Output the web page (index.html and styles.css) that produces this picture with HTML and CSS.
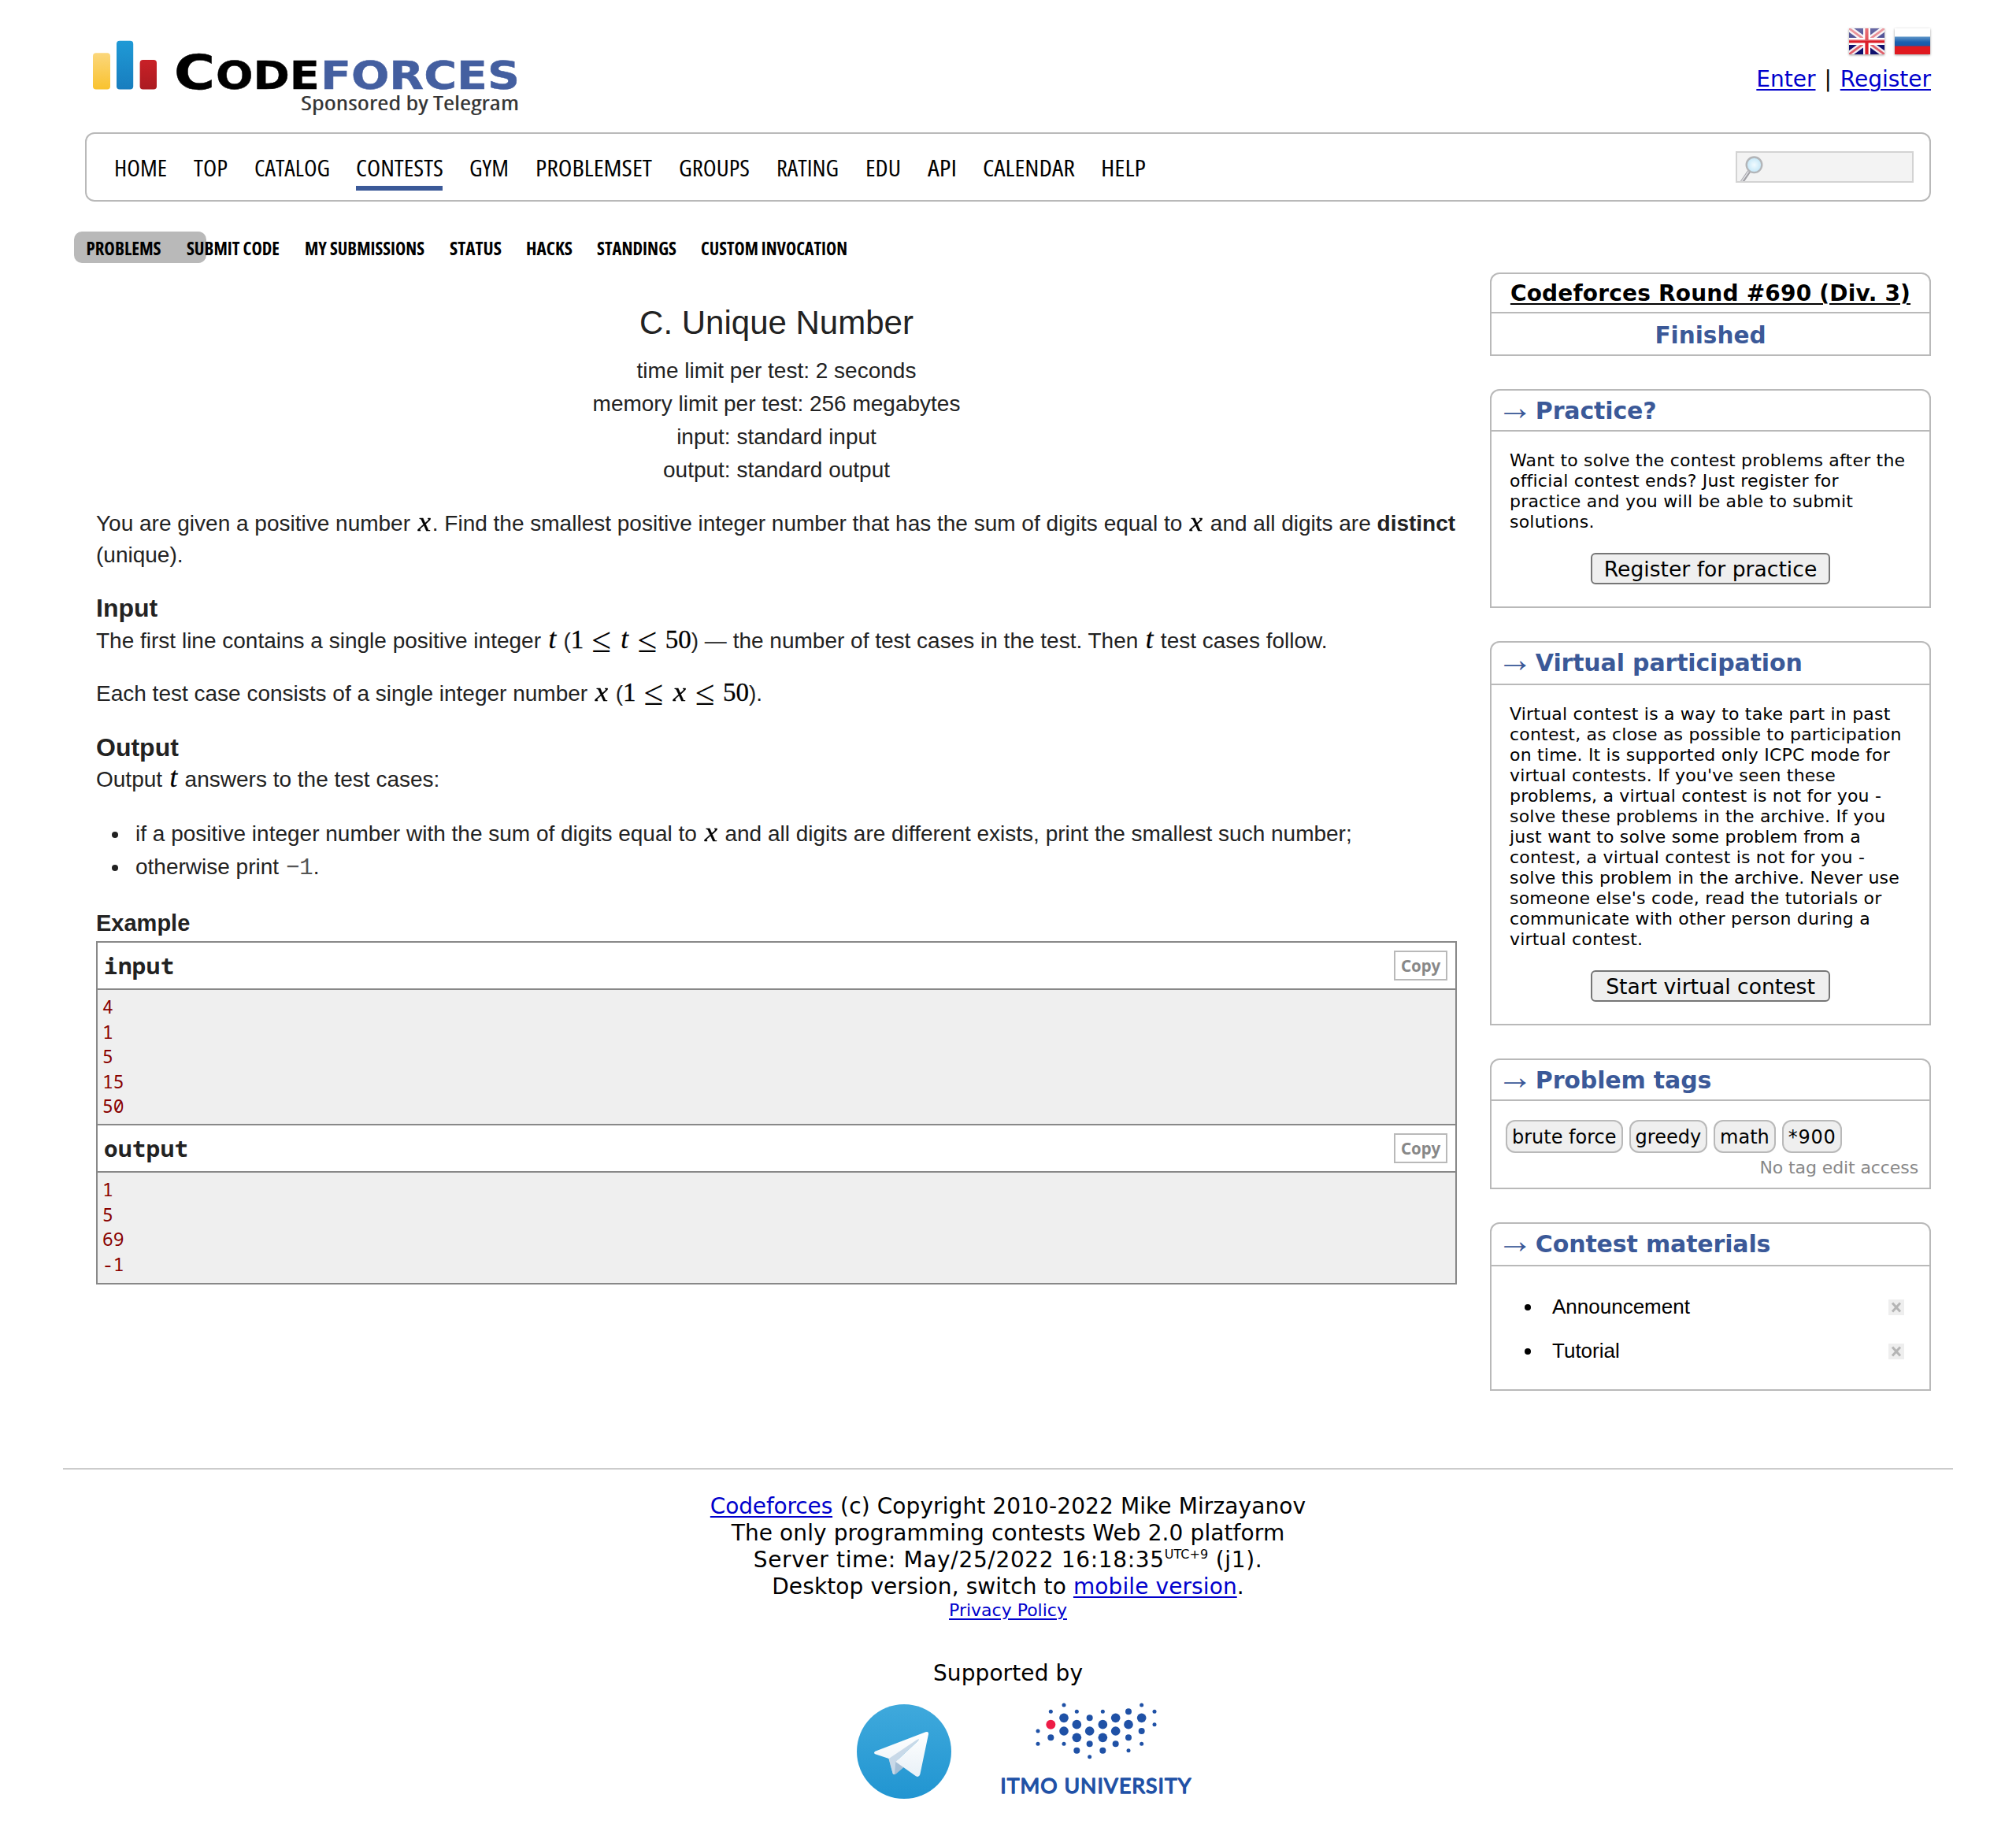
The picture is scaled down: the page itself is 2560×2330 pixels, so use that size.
FILE: index.html
```html
<!DOCTYPE html>
<html lang="en">
<head>
<meta charset="utf-8">
<title>Problem - C - Codeforces</title>
<link rel="stylesheet" href="styles.css">
</head>
<body>
<div class="page">
  <header class="header">
    <svg class="logo" width="560" height="110" viewBox="108 44 560 110">
      <defs>
        <linearGradient id="ly" x1="0" y1="0" x2="0" y2="1"><stop offset="0" stop-color="#fbd77c"/><stop offset="1" stop-color="#f9c22e"/></linearGradient>
        <linearGradient id="lb" x1="0" y1="0" x2="0" y2="1"><stop offset="0" stop-color="#1f9ad6"/><stop offset="1" stop-color="#187dbe"/></linearGradient>
        <linearGradient id="lr" x1="0" y1="0" x2="0" y2="1"><stop offset="0" stop-color="#c92127"/><stop offset="1" stop-color="#ab1b21"/></linearGradient>
      </defs>
      <rect x="118" y="67.3" width="22" height="46.2" rx="4" fill="url(#ly)"/>
      <rect x="148" y="51.7" width="21.2" height="61.8" rx="4" fill="url(#lb)"/>
      <rect x="177.6" y="76" width="21.4" height="37.5" rx="4" fill="url(#lr)"/>
      <g class="brand">
        <text x="221" y="112.500" font-size="60" textLength="52" lengthAdjust="spacingAndGlyphs">C</text>
        <text x="274" y="112.500" font-size="50" textLength="132" lengthAdjust="spacingAndGlyphs">ODE</text>
        <text x="407" y="112.500" font-size="50" fill="#445fa0" stroke="#445fa0" textLength="253" lengthAdjust="spacingAndGlyphs">FORCES</text>
      </g>
      <text class="sponsor" x="382" y="140" textLength="277" lengthAdjust="spacingAndGlyphs">Sponsored by Telegram</text>
    </svg>
    <div class="account">
      <div class="flags">
        <svg width="45" height="33" viewBox="0 0 45 33">
          <defs><linearGradient id="gl" x1="0" y1="0" x2="0" y2="1"><stop offset="0" stop-color="#fff" stop-opacity=".38"/><stop offset=".5" stop-color="#fff" stop-opacity=".22"/><stop offset=".5" stop-color="#fff" stop-opacity="0"/></linearGradient></defs>
          <rect width="45" height="33" fill="#10106e"/>
          <path d="M0 0L45 33M45 0L0 33" stroke="#f4eef2" stroke-width="7.500"/>
          <path d="M0 0L45 33M45 0L0 33" stroke="#e0606a" stroke-width="2.800"/>
          <path d="M22.500 0V33M0 16.500H45" stroke="#fff" stroke-width="9"/>
          <path d="M22.500 0V33M0 16.500H45" stroke="#dc1f2a" stroke-width="4.200"/>
          <rect width="45" height="33" fill="url(#gl)"/>
        </svg>
        <svg width="45" height="33" viewBox="0 0 45 33">
          <defs><linearGradient id="rb" x1="0" y1="0" x2="0" y2="1"><stop offset="0" stop-color="#5f97c9"/><stop offset=".55" stop-color="#1c5fae"/><stop offset="1" stop-color="#1857a6"/></linearGradient></defs>
          <rect width="45" height="33" fill="#fff"/>
          <rect y="10.500" width="45" height="12.500" fill="url(#rb)"/>
          <rect y="22.500" width="45" height="10.500" fill="#e0191f"/>
        </svg>
      </div>
      <div class="auth"><a href="#">Enter</a> | <a href="#">Register</a></div>
    </div>
  </header>

  <nav class="menu">
    <ul class="menu-list">
      <li><svg width="67" height="40"><text x="0" y="28" textLength="67" lengthAdjust="spacingAndGlyphs">HOME</text></svg></li>
      <li><svg width="43" height="40"><text x="0" y="28" textLength="43" lengthAdjust="spacingAndGlyphs">TOP</text></svg></li>
      <li><svg width="95" height="40"><text x="0" y="28" textLength="96" lengthAdjust="spacingAndGlyphs">CATALOG</text></svg></li>
      <li class="current"><svg width="110" height="40"><text x="0" y="28" textLength="111" lengthAdjust="spacingAndGlyphs">CONTESTS</text></svg></li>
      <li><svg width="50" height="40"><text x="0" y="28" textLength="50" lengthAdjust="spacingAndGlyphs">GYM</text></svg></li>
      <li><svg width="148" height="40"><text x="0" y="28" textLength="148" lengthAdjust="spacingAndGlyphs">PROBLEMSET</text></svg></li>
      <li><svg width="90" height="40"><text x="0" y="28" textLength="90" lengthAdjust="spacingAndGlyphs">GROUPS</text></svg></li>
      <li><svg width="79" height="40"><text x="0" y="28" textLength="79" lengthAdjust="spacingAndGlyphs">RATING</text></svg></li>
      <li><svg width="45" height="40"><text x="0" y="28" textLength="45" lengthAdjust="spacingAndGlyphs">EDU</text></svg></li>
      <li><svg width="36" height="40"><text x="0" y="28" textLength="37" lengthAdjust="spacingAndGlyphs">API</text></svg></li>
      <li><svg width="116" height="40"><text x="0" y="28" textLength="117" lengthAdjust="spacingAndGlyphs">CALENDAR</text></svg></li>
      <li><svg width="58" height="40"><text x="0" y="28" textLength="57" lengthAdjust="spacingAndGlyphs">HELP</text></svg></li>
    </ul>
    <div class="search">
      <svg width="40" height="36" viewBox="0 0 40 36">
        <defs><radialGradient id="ls"><stop offset="0" stop-color="#f2fbff"/><stop offset="1" stop-color="#c3e6f7"/></radialGradient></defs>
        <path d="M15.500 23L6 37" stroke="#a0a0a5" stroke-width="4.500" stroke-linecap="round"/>
        <path d="M14.500 23.500L5.500 36.500" stroke="#e2e2e6" stroke-width="1.500"/>
        <circle cx="21.500" cy="15.300" r="9.800" fill="url(#ls)" stroke="#b3b5b8" stroke-width="2.400"/>
      </svg>
    </div>
  </nav>

  <nav class="submenu">
    <ul class="submenu-list">
      <li class="active"><svg width="95" height="40"><text x="-.5" y="30" textLength="95" lengthAdjust="spacingAndGlyphs">PROBLEMS</text></svg></li>
      <li><svg width="118" height="40"><text x="0" y="30" textLength="118" lengthAdjust="spacingAndGlyphs">SUBMIT CODE</text></svg></li>
      <li><svg width="152" height="40"><text x="0" y="30" textLength="152" lengthAdjust="spacingAndGlyphs">MY SUBMISSIONS</text></svg></li>
      <li><svg width="65" height="40"><text x="0" y="30" textLength="66" lengthAdjust="spacingAndGlyphs">STATUS</text></svg></li>
      <li><svg width="58" height="40"><text x="0" y="30" textLength="59" lengthAdjust="spacingAndGlyphs">HACKS</text></svg></li>
      <li><svg width="100" height="40"><text x="0" y="30" textLength="101" lengthAdjust="spacingAndGlyphs">STANDINGS</text></svg></li>
      <li><svg width="188" height="40"><text x="0" y="30" textLength="186" lengthAdjust="spacingAndGlyphs">CUSTOM INVOCATION</text></svg></li>
    </ul>
  </nav>

  <div class="columns">
    <main class="problem">
      <div class="problem-header">
        <h1>C. Unique Number</h1>
        <div>time limit per test: 2 seconds</div>
        <div>memory limit per test: 256 megabytes</div>
        <div>input: standard input</div>
        <div>output: standard output</div>
      </div>
      <p>You are given a positive number <i class="x">x</i>. Find the smallest positive integer number that has the sum of digits equal to <i class="x">x</i> and all digits are <b>distinct</b> (unique).</p>
      <h2>Input</h2>
      <p>The first line contains a single positive integer <i class="t">t</i> (<span class="num">1</span><span class="le">≤</span><i class="t">t</i><span class="le">≤</span><span class="num">50</span>) — the number of test cases in the test. Then <i class="t">t</i> test cases follow.</p>
      <p>Each test case consists of a single integer number <i class="x">x</i> (<span class="num">1</span><span class="le">≤</span><i class="x">x</i><span class="le">≤</span><span class="num">50</span>).</p>
      <h2>Output</h2>
      <p>Output <i class="t">t</i> answers to the test cases:</p>
      <ul class="cases">
        <li>if a positive integer number with the sum of digits equal to <i class="x">x</i> and all digits are different exists, print the smallest such number;</li>
        <li>otherwise print <span class="tt">−1</span>.</li>
      </ul>
      <h3>Example</h3>
      <div class="sample">
        <div class="sample-title"><span>input</span><button class="copy">Copy</button></div>
<pre class="in">4
1
5
15
50</pre>
        <div class="sample-title"><span>output</span><button class="copy">Copy</button></div>
<pre class="out">1
5
69
-1</pre>
      </div>
    </main>

    <aside class="sidebar">
      <section class="box contest">
        <div class="contest-name"><a href="#">Codeforces Round #690 (Div. 3)</a></div>
        <div class="contest-state">Finished</div>
      </section>
      <section class="box practice">
        <h4><span class="arrow">→</span>Practice?</h4>
        <p>Want to solve the contest problems after the official contest ends? Just register for practice and you will be able to submit solutions.</p>
        <button class="action">Register for practice</button>
      </section>
      <section class="box virtual">
        <h4><span class="arrow">→</span>Virtual participation</h4>
        <p>Virtual contest is a way to take part in past contest, as close as possible to participation on time. It is supported only ICPC mode for virtual contests. If you've seen these problems, a virtual contest is not for you - solve these problems in the archive. If you just want to solve some problem from a contest, a virtual contest is not for you - solve this problem in the archive. Never use someone else's code, read the tutorials or communicate with other person during a virtual contest.</p>
        <button class="action">Start virtual contest</button>
      </section>
      <section class="box tags">
        <h4><span class="arrow">→</span>Problem tags</h4>
        <div class="tag-list"><span>brute force</span><span>greedy</span><span>math</span><span class="difficulty">*900</span></div>
        <div class="no-access">No tag edit access</div>
      </section>
      <section class="box materials">
        <h4><span class="arrow">→</span>Contest materials</h4>
        <ul>
          <li><span>Announcement</span><svg class="close" width="20" height="20" viewBox="0 0 20 20"><path d="M5 4.500L15 15.500M15 4.500L5 15.500"/></svg></li>
          <li><span>Tutorial</span><svg class="close" width="20" height="20" viewBox="0 0 20 20"><path d="M5 4.500L15 15.500M15 4.500L5 15.500"/></svg></li>
        </ul>
      </section>
    </aside>
  </div>
</div>

<footer class="footer">
  <div><a class="home" href="#">Codeforces</a> (c) Copyright 2010-2022 Mike Mirzayanov</div>
  <div>The only programming contests Web 2.0 platform</div>
  <div class="time">Server time: May/25/2022 16:18:35<sup>UTC+9</sup> (j1).</div>
  <div>Desktop version, switch to <a href="#">mobile version</a>.</div>
  <div class="privacy"><a href="#">Privacy Policy</a></div>
  <div class="supported">Supported by</div>
  <div class="partners">
    <svg width="120" height="120" viewBox="84 192 360 360">
      <defs>
        <linearGradient id="tg" x1="0" y1="0" x2="0" y2="1"><stop offset="0" stop-color="#3fa9dc"/><stop offset="1" stop-color="#2195d1"/></linearGradient>
        <linearGradient id="tw" x1="0" y1="0" x2="0" y2="1"><stop offset="0" stop-color="#fff"/><stop offset="1" stop-color="#e9f1f7"/></linearGradient>
      </defs>
      <circle cx="264" cy="372" r="180" fill="url(#tg)"/>
      <path d="M205 397L221 456Q226 463 234 457L264 431L240 400Z" fill="#a5bfd6"/>
      <path d="M205 397L221 456Q226 463 228 455L232 411L322 327L300 320Z" fill="#c8d9e8"/>
      <path d="M154 371L346 298Q358 294 357 306L325 459Q321 472 309 466L232 411L318 331Q325 322 312 328L206 399L154 382Q146 377 154 371Z" fill="url(#tw)"/>
    </svg>
    <svg width="246" height="124" viewBox="630 180 738 372">
      <g fill="#1f51a6">
        <circle cx="873" cy="244" r="17.500"/><circle cx="873" cy="294" r="17.500"/><circle cx="922" cy="269" r="17.500"/><circle cx="922" cy="319" r="17.500"/><circle cx="971" cy="294" r="17.500"/><circle cx="1021" cy="269" r="17.500"/><circle cx="1021" cy="319" r="17.500"/><circle cx="1070" cy="244" r="17.500"/><circle cx="1070" cy="294" r="17.500"/><circle cx="1119" cy="269" r="17.500"/><circle cx="1169" cy="244" r="17.500"/>
        <circle cx="823" cy="319" r="12"/><circle cx="971" cy="244" r="12"/><circle cx="971" cy="343" r="12"/><circle cx="922" cy="368" r="12"/><circle cx="1021" cy="368" r="12"/><circle cx="1070" cy="343" r="12"/><circle cx="1119" cy="220" r="12"/><circle cx="1119" cy="319" r="12"/><circle cx="1169" cy="294" r="12"/>
        <circle cx="873" cy="195" r="7.500"/><circle cx="823" cy="220" r="7.500"/><circle cx="922" cy="220" r="7.500"/><circle cx="1021" cy="220" r="7.500"/><circle cx="1169" cy="195" r="7.500"/><circle cx="1218" cy="220" r="7.500"/><circle cx="1218" cy="269" r="7.500"/><circle cx="774" cy="294" r="7.500"/><circle cx="774" cy="343" r="7.500"/><circle cx="873" cy="343" r="7.500"/><circle cx="971" cy="392" r="7.500"/><circle cx="1119" cy="368" r="7.500"/><circle cx="1169" cy="343" r="7.500"/>
      </g>
      <circle cx="823" cy="269" r="18" fill="#ee1c46"/>
      <text class="itmo" x="631" y="530" textLength="726" lengthAdjust="spacing">ITMO UNIVERSITY</text>
    </svg>
  </div>
</footer>
</body>
</html>
```
FILE: styles.css
```css
* { box-sizing: border-box; }
body {
  margin: 0;
  background: #fff;
  color: #000;
  font-family: "DejaVu Sans", Verdana, sans-serif;
  font-size: 28px;
}
a { color: #0000cc; text-decoration-thickness: 2px; text-underline-offset: 3px; }
h1, h2, h3, h4, p, ul, pre { margin: 0; }
ul { padding: 0; }
svg { display: block; }
button { font-family: inherit; margin: 0; }

.page { width: 2344px; margin: 0 auto; }

/* header */
.header { height: 168px; display: flex; justify-content: space-between; }
.logo { margin-top: 44px; }
.account { padding-top: 35.500px; text-align: right; }
.flags { display: flex; justify-content: flex-end; gap: 13px; height: 36px; margin-right: 1px; }
.flags svg { filter: drop-shadow(0 1px 1.500px rgba(0, 0, 0, .4)); }
.auth { line-height: 34px; word-spacing: 2px; padding-top: 12.500px; }
.brand { font-family: "DejaVu Sans", sans-serif; font-weight: 700; stroke: #000; stroke-width: .5; }
.sponsor { font: 400 25.500px "Open Sans", sans-serif; font-stretch: condensed; fill: #333; stroke: #333; stroke-width: .2; }

/* main menu */
.menu {
  height: 88px;
  border: 2px solid #b9b9b9;
  border-radius: 12px;
  display: flex;
  justify-content: space-between;
  padding: 22px 20px 0 35px;
}
.menu-list { display: flex; gap: 34px; list-style: none; }
.menu-list text { font: 400 29.400px "Open Sans", sans-serif; font-stretch: condensed; }
.menu-list svg, .submenu-list svg { overflow: visible; }
.menu-list li { height: 50px; padding-top: 4px; }
.menu-list .current { border-bottom: 6px solid #3b5998; }
.search {
  width: 226px;
  height: 40px;
  border: 2px solid #d3d3d3;
  background: #f3f3f3;
  overflow: hidden;
}

/* second level menu */
.submenu { padding-top: 38px; height: 90px; }
.submenu-list { display: flex; gap: 32px; list-style: none; padding-left: 2px; }
.submenu-list text { font: 700 22.800px "Open Sans", sans-serif; font-stretch: condensed; }
.submenu-list .active {
  background: #b9b9b9;
  border-radius: 10px;
  padding: 0 57px 0 16px;
  margin: 0 -57px 0 -16px;
}
.submenu-list li { position: relative; z-index: 1; }
.submenu-list .active { z-index: 0; }

.columns { display: grid; grid-template-columns: 1728px 560px; column-gap: 42px; padding-left: 14px; }

/* problem statement */
.problem {
  padding-top: 39px;
  font-family: "Liberation Sans", Arial, sans-serif;
  color: #222;
}
.problem-header { text-align: center; line-height: 42px; margin-bottom: 27px; }
.problem h1 { font-size: 42px; font-weight: 400; line-height: 50px; margin-bottom: 15px; }
.problem p { line-height: 39.500px; margin-bottom: 28px; }
.problem h2 { font-size: 32px; line-height: 41.500px; }
.problem h3 { font-size: 29px; line-height: 41px; margin: 28.500px 0 2px; }
.cases { padding-left: 50px; line-height: 42px; list-style: none; }
.cases li::before, .materials li::before {
  content: "";
  display: inline-block;
  width: 8px;
  height: 8px;
  border-radius: 50%;
  background: currentColor;
}
.cases li::before { margin: 0 22px 0 -30px; vertical-align: 4px; }

/* formulas */
.x, .t, .num, .le { font-family: "Liberation Serif", "Times New Roman", serif; line-height: 0; color: #000; }
.num { font-size: 33px; -webkit-text-stroke: .3px #000; }
.x { display: inline-block; font-size: 33px; width: 20px; transform: scaleX(1.12); text-align: center; -webkit-text-stroke: .3px #000; }
.t { display: inline-block; font-size: 35px; width: 13px; text-align: center; -webkit-text-stroke: .3px #000; }
.le { font-size: 45px; margin: 0 10.500px 0 10px; vertical-align: -5px; }
.tt { font-family: "Liberation Mono", "Courier New", monospace; font-size: 29px; color: #555; margin-left: 1px; }

.sample { border: 2px solid #888; }
.sample-title {
  height: 58px;
  display: flex;
  justify-content: space-between;
  align-items: center;
  padding: 0 10px 0 8px;
  font: 700 29.200px/58px "Noto Sans Mono", "DejaVu Sans Mono", monospace;
  letter-spacing: .4px;
}
.sample pre {
  border-top: 2px solid #888;
  background: #efefef;
  color: #880000;
  font: 23px/31.600px "Noto Sans Mono", "DejaVu Sans Mono", monospace;
  padding: 6px 6px 0;
}
.sample .in { height: 174px; border-bottom: 2px solid #888; }
.sample .out { height: 142px; }
.copy {
  width: 68px;
  height: 38px;
  padding: 0;
  border: 2px solid #b9b9b9;
  background: #fff;
  color: #888;
  font: 700 20.500px/32px "Noto Sans", sans-serif;
}

/* sidebar */
.box { border: 2px solid #b9b9b9; border-radius: 12px 12px 0 0; margin-bottom: 42px; }
.contest { height: 106px; text-align: center; font-weight: 700; }
.contest-name { height: 50px; line-height: 50px; border-bottom: 2px solid #b9b9b9; letter-spacing: .19px; }
.contest-name a { color: #000; }
.contest-state { font-size: 29.500px; line-height: 56.500px; color: #3b5998; }
.box h4 {
  height: 52px;
  padding-left: 7px;
  font-size: 30px;
  line-height: 51px;
  letter-spacing: -.15px;
  color: #3b5998;
  border-bottom: 2px solid #b9b9b9;
}
.arrow { font: 400 46px/0 "Liberation Serif", serif; vertical-align: -1px; margin-right: 3px; }
.box p { font-size: 22px; line-height: 26px; letter-spacing: .2px; padding: 24px 20px 0 23px; }
.action {
  display: block;
  width: 304px;
  height: 40px;
  margin: 26px auto 0;
  padding: 0;
  border: 2px solid #767676;
  border-radius: 6px;
  background: #efefef;
  font-size: 26.600px;
  line-height: 35px;
}
.practice { height: 278px; }
.virtual { height: 488px; }
.virtual h4, .materials h4 { height: 54px; }
.tags { height: 166px; }
.tag-list { display: flex; gap: 8px; padding: 24px 18px 0; }
.tag-list span {
  height: 42px;
  border: 2px solid #b9b9b9;
  border-radius: 12px;
  background: #efefef;
  padding: 0 6px;
  font-size: 24px;
  line-height: 40px;
}
.tag-list .difficulty { letter-spacing: .7px; }
.no-access { font-size: 22px; line-height: 26px; letter-spacing: -.1px; color: #888; text-align: right; padding: 6px 14px 0 0; }
.materials { height: 214px; margin-bottom: 0; }
.materials ul { padding: 23.500px 32px 0 42px; font: 26px/55px "Liberation Sans", Arial, sans-serif; list-style: none; }
.materials li { display: flex; align-items: center; height: 56px; }
.materials li::before { margin-right: 27px; }
.close { margin-left: auto; background: #eee; }
.close path { stroke: #b5b5b5; stroke-width: 3; fill: none; }

/* footer */
.footer {
  width: 2400px;
  margin: 98px auto 0;
  border-top: 2px solid #ccc;
  padding-top: 29.500px;
  text-align: center;
  line-height: 34px;
  letter-spacing: .1px;
}
.footer div { height: 34px; }
.footer .home { letter-spacing: -.15px; margin-right: 1px; }
.footer .time { letter-spacing: .65px; }
.footer sup { font-size: 16px; line-height: 0; vertical-align: 11px; letter-spacing: 0; }
.footer .privacy { font-size: 22px; line-height: 26px; height: 27.500px; letter-spacing: 0; }
.footer .supported { margin-top: 49px; }
.footer .partners { height: 124px; display: flex; justify-content: center; gap: 62px; margin-top: 18px; padding-left: 43px; }
.partners svg:first-child { margin-top: 4px; }
.partners svg { overflow: visible; }
.itmo { font: 400 80px "Lato", sans-serif; fill: #1f51a6; stroke: #1f51a6; stroke-width: 4; stroke-linejoin: round; }
```
